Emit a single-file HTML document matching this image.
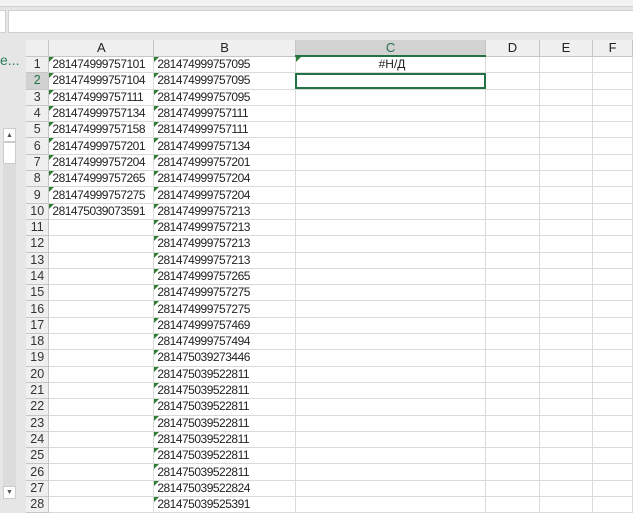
<!DOCTYPE html><html><head><style>
body{margin:0;width:633px;height:512px;overflow:hidden;background:#e6e6e6;font-family:"Liberation Sans",Calibri,sans-serif;position:relative}
.a{position:absolute}
table{border-collapse:collapse;position:absolute;left:26px;top:40px;table-layout:fixed;font-size:12px}
td{border-right:1px solid #dadada;border-bottom:1px solid #dadada;height:15.3px;padding:0 0 0 3px;white-space:nowrap;overflow:hidden;background:#fff;color:#222;position:relative;line-height:15px;letter-spacing:-0.5px}
td.h{background:#efefef;text-align:center;color:#333;border-color:#c6c6c6;padding:0;letter-spacing:0;font-size:12.5px}
tr.hd td{height:15px;background:#efefef;text-align:center;border-color:#c6c6c6;padding:0;font-size:13px;letter-spacing:0}
td.g:before{content:"";position:absolute;left:0;top:0;border-top:5px solid #2e7d32;border-right:5px solid transparent}
</style></head><body>
<div class="a" style="left:0;top:0;width:633px;height:6px;background:#f3f3f3;border-bottom:1px solid #d0d0d0"></div>
<div class="a" style="left:0;top:10px;width:5px;height:21px;background:#fff;border:1px solid #d0d0d0;border-left:none"></div>
<div class="a" style="left:8px;top:10px;width:630px;height:21px;background:#fff;border:1px solid #d0d0d0"></div>
<div class="a" style="left:0;top:52px;color:#2e7d5a;font-size:14px">e...</div>
<div class="a" style="left:3px;top:128px;width:13px;height:370px;background:#dcdcdc"></div>
<div class="a" style="left:3px;top:128px;width:13px;height:14px;background:#fff;border:1px solid #ccc;box-sizing:border-box;font-size:7px;text-align:center;color:#555;line-height:13px">▲</div>
<div class="a" style="left:3px;top:142px;width:13px;height:22px;background:#fff;border:1px solid #ccc;box-sizing:border-box"></div>
<div class="a" style="left:3px;top:486px;width:13px;height:13px;background:#fff;border:1px solid #ccc;box-sizing:border-box;font-size:7px;text-align:center;color:#555;line-height:12px">▼</div>
<table>
<colgroup><col style="width:23px"><col style="width:105px"><col style="width:142px"><col style="width:192px"><col style="width:54px"><col style="width:54px"><col style="width:40px"></colgroup>
<tr class="hd"><td style="background:#efefef"></td><td>A</td><td>B</td><td style="background:#d2d2d2;color:#217346;border-bottom:2px solid #217346">C</td><td>D</td><td>E</td><td>F</td></tr>
<tr><td class="h">1</td><td class="g">281474999757101</td><td class="g">281474999757095</td><td class="g" style="text-align:center;letter-spacing:0">#Н/Д</td><td></td><td></td><td></td></tr>
<tr><td class="h" style="background:#d2d2d2;color:#217346">2</td><td class="g">281474999757104</td><td class="g">281474999757095</td><td style="outline:2px solid #217346;outline-offset:-2px"></td><td></td><td></td><td></td></tr>
<tr><td class="h">3</td><td class="g">281474999757111</td><td class="g">281474999757095</td><td></td><td></td><td></td><td></td></tr>
<tr><td class="h">4</td><td class="g">281474999757134</td><td class="g">281474999757111</td><td></td><td></td><td></td><td></td></tr>
<tr><td class="h">5</td><td class="g">281474999757158</td><td class="g">281474999757111</td><td></td><td></td><td></td><td></td></tr>
<tr><td class="h">6</td><td class="g">281474999757201</td><td class="g">281474999757134</td><td></td><td></td><td></td><td></td></tr>
<tr><td class="h">7</td><td class="g">281474999757204</td><td class="g">281474999757201</td><td></td><td></td><td></td><td></td></tr>
<tr><td class="h">8</td><td class="g">281474999757265</td><td class="g">281474999757204</td><td></td><td></td><td></td><td></td></tr>
<tr><td class="h">9</td><td class="g">281474999757275</td><td class="g">281474999757204</td><td></td><td></td><td></td><td></td></tr>
<tr><td class="h">10</td><td class="g">281475039073591</td><td class="g">281474999757213</td><td></td><td></td><td></td><td></td></tr>
<tr><td class="h">11</td><td></td><td class="g">281474999757213</td><td></td><td></td><td></td><td></td></tr>
<tr><td class="h">12</td><td></td><td class="g">281474999757213</td><td></td><td></td><td></td><td></td></tr>
<tr><td class="h">13</td><td></td><td class="g">281474999757213</td><td></td><td></td><td></td><td></td></tr>
<tr><td class="h">14</td><td></td><td class="g">281474999757265</td><td></td><td></td><td></td><td></td></tr>
<tr><td class="h">15</td><td></td><td class="g">281474999757275</td><td></td><td></td><td></td><td></td></tr>
<tr><td class="h">16</td><td></td><td class="g">281474999757275</td><td></td><td></td><td></td><td></td></tr>
<tr><td class="h">17</td><td></td><td class="g">281474999757469</td><td></td><td></td><td></td><td></td></tr>
<tr><td class="h">18</td><td></td><td class="g">281474999757494</td><td></td><td></td><td></td><td></td></tr>
<tr><td class="h">19</td><td></td><td class="g">281475039273446</td><td></td><td></td><td></td><td></td></tr>
<tr><td class="h">20</td><td></td><td class="g">281475039522811</td><td></td><td></td><td></td><td></td></tr>
<tr><td class="h">21</td><td></td><td class="g">281475039522811</td><td></td><td></td><td></td><td></td></tr>
<tr><td class="h">22</td><td></td><td class="g">281475039522811</td><td></td><td></td><td></td><td></td></tr>
<tr><td class="h">23</td><td></td><td class="g">281475039522811</td><td></td><td></td><td></td><td></td></tr>
<tr><td class="h">24</td><td></td><td class="g">281475039522811</td><td></td><td></td><td></td><td></td></tr>
<tr><td class="h">25</td><td></td><td class="g">281475039522811</td><td></td><td></td><td></td><td></td></tr>
<tr><td class="h">26</td><td></td><td class="g">281475039522811</td><td></td><td></td><td></td><td></td></tr>
<tr><td class="h">27</td><td></td><td class="g">281475039522824</td><td></td><td></td><td></td><td></td></tr>
<tr><td class="h">28</td><td></td><td class="g">281475039525391</td><td></td><td></td><td></td><td></td></tr>
</table>
</body></html>
